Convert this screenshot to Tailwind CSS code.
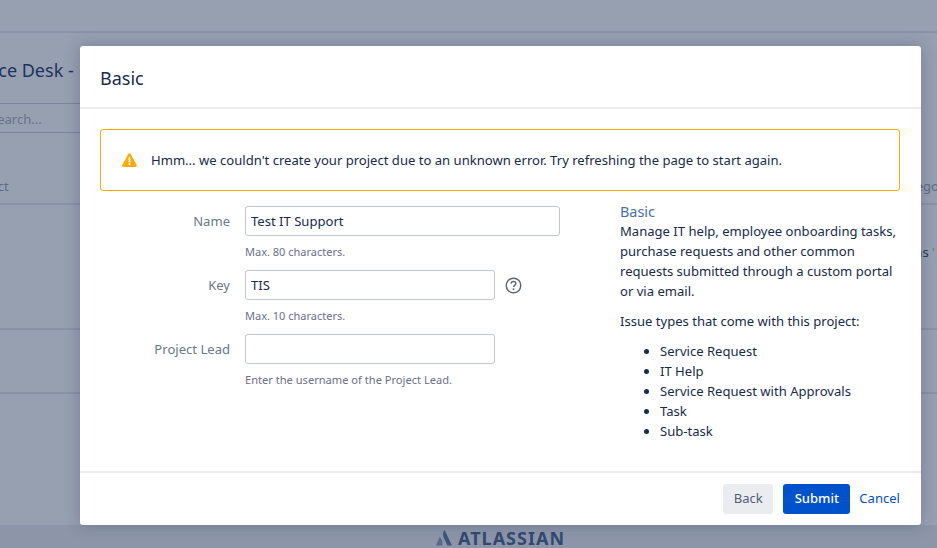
<!DOCTYPE html>
<html lang="en">
  <head>
    <meta charset="utf-8" />
    <title>Basic</title>
    <script src="https://cdn.jsdelivr.net/npm/@tailwindcss/browser@4"></script>
  </head>
  <body class="font-['Noto_Sans',sans-serif] text-[13.07px] text-[#172b4d]">
    <div class="relative h-[548px] w-[937px] overflow-hidden bg-[#97a0b1]">
      <!-- Page behind the dialog -->
      <div class="flex h-[525px] flex-col overflow-hidden">
        <div class="h-[33px] shrink-0 border-b-2 border-[#8a93a5]"></div>
        <div class="h-[70px] shrink-0">
          <p class="mt-[21px] ml-[-43px] whitespace-nowrap text-[18px] leading-[32px] text-[#1d3260]">Service Desk -</p>
        </div>
        <div class="flex h-[30px] w-[80px] shrink-0 items-center overflow-hidden border-y border-[#7a849a] pt-[3px]">
          <span class="ml-[-10px] whitespace-nowrap text-[#687389]">Search...</span>
        </div>
        <div class="flex h-[72px] shrink-0 items-end justify-between border-b-2 border-[#8a93a5] pb-[6px] text-[#5f6a82]">
          <span class="ml-[-34px]">Project</span>
          <span class="mr-[-14px]">Category</span>
        </div>
        <div class="flex h-[125px] shrink-0 justify-end border-b-2 border-[#8a93a5] pt-[38px] text-[#24385f]">
          <span class="mr-[2px]">ons <span class="text-[#8a7a50]">'</span></span>
        </div>
        <div class="h-[64px] shrink-0 border-b-2 border-[#8a93a5]"></div>
      </div>
      <div class="flex h-[23px] items-center gap-[6px] bg-[#8d96a8] pl-[436px] pt-[3px]">
        <svg width="16" height="16" viewBox="0 0 17 16"><path fill="#3f557a" d="M8.600 0C7.200 2.400 7 5.300 8.500 8.200L12.200 16H17L9.600 .5C9.300 -.1 8.900 -.1 8.600 0Z"/><path fill="#566a8c" d="M4.500 7.400C4.200 7 3.800 7 3.600 7.500L0 16H6.500C7.500 13.600 6.500 9.800 4.500 7.400Z"/></svg>
        <span class="text-[18px] leading-[20px] font-bold tracking-[1px] text-[#334a70]">ATLASSIAN</span>
      </div>

      <!-- Dialog -->
      <div class="absolute top-[46px] left-[79.5px] flex h-[479px] w-[841px] flex-col rounded-[3px] bg-white shadow-[0_0_16px_rgba(9,30,66,0.25)]">
        <div class="flex h-[63px] shrink-0 items-center border-b-2 border-[#ebecf0] px-[20.5px] pt-[2px]">
          <h2 class="text-[18px] leading-[24px] text-[#172b4d]">Basic</h2>
        </div>
        <div class="flex-1 px-[20.5px] pt-[20px]">
          <div class="flex h-[62px] items-center gap-[14px] rounded-[3px] border border-[#ffab00] pl-[21px]">
            <svg width="15" height="14" viewBox="0 0 15 14"><path fill="#ffab00" d="M6.300 1.100C6.900 .1 8.100 .1 8.700 1.100L14.600 11.700C15.200 12.800 14.600 14 13.400 14H1.600C.4 14 -.2 12.800 .4 11.700Z"/><path fill="#fff" d="M6.600 4.200H8.400V9H6.600ZM6.600 10.100H8.400V11.900H6.600Z"/></svg>
            <p class="leading-[20px] text-[#172b4d]">Hmm... we couldn't create your project due to an unknown error. Try refreshing the page to start again.</p>
          </div>
          <div class="mt-[10px] flex">
            <form class="mt-[5px] w-[520px] shrink-0">
              <div class="flex items-center">
                <label class="mr-[15px] w-[130px] pt-[2px] text-right text-[#6b778c]">Name</label>
                <input value="Test IT Support" class="h-[30px] w-[315px] rounded-[3px] border border-[#c1c7d0] px-[5px] text-[#172b4d]" />
              </div>
              <p class="mt-[8px] ml-[145px] text-[11px] leading-[16px] text-[#6b6f8c]">Max. 80 characters.</p>
              <div class="mt-[10px] flex items-center">
                <label class="mr-[15px] w-[130px] pt-[2px] text-right text-[#6b778c]">Key</label>
                <input value="TIS" class="h-[30px] w-[250px] rounded-[3px] border border-[#c1c7d0] px-[5px] text-[#172b4d]" />
                <svg class="ml-[10px]" width="17" height="17" viewBox="0 0 18 18" fill="none"><circle cx="9" cy="9" r="7.700" stroke="#5f6470" stroke-width="1.500"/><path d="M6.500 7C6.600 5.600 7.700 4.800 9 4.800C10.400 4.800 11.500 5.700 11.500 7C11.500 8.500 9.100 8.700 9.100 10.700" stroke="#5f6470" stroke-width="1.500"/><circle cx="9" cy="13" r="1" fill="#5f6470"/></svg>
              </div>
              <p class="mt-[8px] ml-[145px] text-[11px] leading-[16px] text-[#6b6f8c]">Max. 10 characters.</p>
              <div class="mt-[10px] flex items-center">
                <label class="mr-[15px] w-[130px] pt-[2px] text-right text-[#6b778c]">Project Lead</label>
                <input class="h-[30px] w-[250px] rounded-[3px] border border-[#c1c7d0] px-[5px]" />
              </div>
              <p class="mt-[8px] ml-[145px] text-[11.1px] leading-[16px] text-[#6b6f8c]">Enter the username of the Project Lead.</p>
            </form>
            <div class="w-[280px] shrink-0 leading-[20px]">
              <h3 class="mb-[-1px] pt-[1px] text-[14.4px] leading-[20px] text-[#4a6fa5]">Basic</h3>
              <p>Manage IT help, employee onboarding tasks, purchase requests and other common requests submitted through a custom portal or via email.</p>
              <p class="mt-[10px]">Issue types that come with this project:</p>
              <ul class="mt-[10px] list-disc pl-[40px]">
                <li>Service Request</li>
                <li>IT Help</li>
                <li>Service Request with Approvals</li>
                <li>Task</li>
                <li>Sub-task</li>
              </ul>
            </div>
          </div>
        </div>
        <div class="flex h-[54px] shrink-0 items-center justify-end border-t-2 border-[#ebecf0] pr-[20.5px]">
          <button class="h-[30px] w-[50px] rounded-[3px] bg-[#ebecf0] text-[#505f79]">Back</button>
          <button class="ml-[10px] h-[30px] w-[67px] rounded-[3px] bg-[#0052cc] font-medium text-white">Submit</button>
          <a class="ml-[9px] text-[#0052cc]" href="#">Cancel</a>
        </div>
      </div>
    </div>
  </body>
</html>
